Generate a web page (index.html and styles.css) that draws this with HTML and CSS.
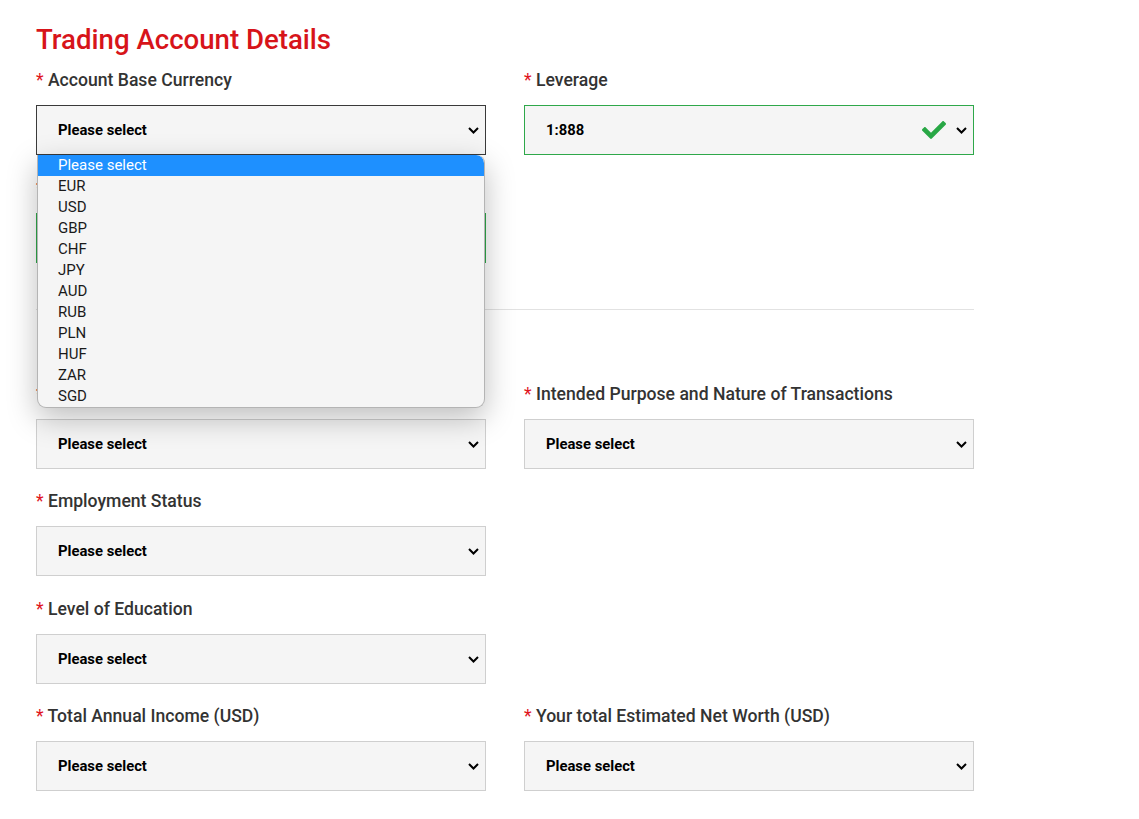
FILE: index.html
```html
<!DOCTYPE html>
<html lang="en">
<head>
<meta charset="utf-8">
<title>Trading Account Details</title>
<link rel="stylesheet" href="styles.css">
</head>
<body>
<main class="page">
  <h1 class="title">Trading Account Details</h1>

  <div class="grid">
    <div class="field">
      <label class="label"><span class="req">*</span> Account Base Currency</label>
      <div class="select focused">
        <span class="value">Please select</span>
        <svg class="chev" width="11" height="7" viewBox="0 0 11 7"><path d="M1 1 L5.5 5.5 L10 1" fill="none" stroke="#000" stroke-width="2"/></svg>
      </div>
      <ul class="options">
        <li class="opt active">Please select</li>
        <li class="opt">EUR</li>
        <li class="opt">USD</li>
        <li class="opt">GBP</li>
        <li class="opt">CHF</li>
        <li class="opt">JPY</li>
        <li class="opt">AUD</li>
        <li class="opt">RUB</li>
        <li class="opt">PLN</li>
        <li class="opt">HUF</li>
        <li class="opt">ZAR</li>
        <li class="opt">SGD</li>
      </ul>
    </div>
    <div class="field">
      <label class="label"><span class="req">*</span> Leverage</label>
      <div class="select valid">
        <span class="value">1:888</span>
        <svg class="check" width="24" height="24" viewBox="0 0 512 512"><path fill="#28a745" d="M173.898 439.404l-166.4-166.4c-9.997-9.997-9.997-26.206 0-36.204l36.203-36.204c9.997-9.998 26.207-9.998 36.204 0L192 312.69 432.095 72.596c9.997-9.997 26.207-9.997 36.204 0l36.203 36.204c9.997 9.997 9.997 26.206 0 36.204l-294.4 294.401c-9.998 9.997-26.207 9.997-36.204-.001z"/></svg>
        <svg class="chev" width="11" height="7" viewBox="0 0 11 7"><path d="M1 1 L5.5 5.5 L10 1" fill="none" stroke="#000" stroke-width="2"/></svg>
      </div>
    </div>
    <div class="field">
      <label class="label"><span class="req">*</span></label>
      <div class="select valid"></div>
    </div>
  </div>

  <hr class="divider">

  <div class="grid">
    <div class="field">
      <label class="label"><span class="req">*</span></label>
      <div class="select">
        <span class="value">Please select</span>
        <svg class="chev" width="11" height="7" viewBox="0 0 11 7"><path d="M1 1 L5.5 5.5 L10 1" fill="none" stroke="#000" stroke-width="2"/></svg>
      </div>
    </div>
    <div class="field">
      <label class="label"><span class="req">*</span> Intended Purpose and Nature of Transactions</label>
      <div class="select">
        <span class="value">Please select</span>
        <svg class="chev" width="11" height="7" viewBox="0 0 11 7"><path d="M1 1 L5.5 5.5 L10 1" fill="none" stroke="#000" stroke-width="2"/></svg>
      </div>
    </div>
    <div class="field">
      <label class="label"><span class="req">*</span> Employment Status</label>
      <div class="select">
        <span class="value">Please select</span>
        <svg class="chev" width="11" height="7" viewBox="0 0 11 7"><path d="M1 1 L5.5 5.5 L10 1" fill="none" stroke="#000" stroke-width="2"/></svg>
      </div>
    </div>
    <div class="field empty"></div>
    <div class="field">
      <label class="label"><span class="req">*</span> Level of Education</label>
      <div class="select">
        <span class="value">Please select</span>
        <svg class="chev" width="11" height="7" viewBox="0 0 11 7"><path d="M1 1 L5.5 5.5 L10 1" fill="none" stroke="#000" stroke-width="2"/></svg>
      </div>
    </div>
    <div class="field empty"></div>
    <div class="field">
      <label class="label"><span class="req">*</span> Total Annual Income (USD)</label>
      <div class="select">
        <span class="value">Please select</span>
        <svg class="chev" width="11" height="7" viewBox="0 0 11 7"><path d="M1 1 L5.5 5.5 L10 1" fill="none" stroke="#000" stroke-width="2"/></svg>
      </div>
    </div>
    <div class="field">
      <label class="label"><span class="req">*</span> Your total Estimated Net Worth (USD)</label>
      <div class="select">
        <span class="value">Please select</span>
        <svg class="chev" width="11" height="7" viewBox="0 0 11 7"><path d="M1 1 L5.5 5.5 L10 1" fill="none" stroke="#000" stroke-width="2"/></svg>
      </div>
    </div>
  </div>
</main>
</body>
</html>
```
FILE: styles.css
```css
* { box-sizing: border-box; }
html, body {
  margin: 0;
  padding: 0;
  background: #fff;
  font-family: Roboto, "Liberation Sans", Arial, sans-serif;
  color: #333;
}
.page {
  width: 1139px;
  padding: 22px 36px 20px 36px;
}
.title {
  margin: 0 0 10px 0;
  font-size: 27.6px;
  line-height: 36px;
  font-weight: 500;
  color: #d7141a;
}
.grid {
  display: grid;
  grid-template-columns: 450px 450px;
  column-gap: 38px;
  row-gap: 20.6px;
}
.field {
  position: relative;
}
.label {
  display: block;
  height: 24px;
  font-size: 17.6px;
  line-height: 24px;
  font-weight: 500;
  color: #333;
  margin-bottom: 13px;
}
.req {
  color: #e0141e;
  font-weight: 400;
}
.select {
  position: relative;
  height: 50px;
  border: 1px solid #cfcfcf;
  background: #f5f5f5;
  display: flex;
  align-items: center;
  padding-left: 21px;
}
.select.focused { border-color: #3a3a3a; }
.select.valid { border-color: #2ea84a; }
.value {
  font-size: 14.8px;
  font-weight: 700;
  color: #000;
}
.chev {
  position: absolute;
  right: 6px;
  top: 21px;
}
.check {
  position: absolute;
  right: 27px;
  top: 12px;
}
.options {
  position: absolute;
  z-index: 10;
  left: 1px;
  top: 87px;
  width: 448px;
  margin: 0;
  padding: 0;
  list-style: none;
  background: #f5f5f5;
  border: 1px solid #b4b4b4;
  border-top: none;
  border-radius: 0 8px 9px 9px;
  overflow: hidden;
  box-shadow: 0 10px 30px rgba(0, 0, 0, 0.26);
}
.opt {
  height: 21px;
  line-height: 21px;
  padding-left: 20px;
  font-size: 15px;
  color: #1a1a1a;
}
.opt.active {
  background: #1e90ff;
  color: #fff;
  border-radius: 0 8px 0 0;
}
.divider {
  margin: 46px 0 72px 0;
  width: 938px;
  border: none;
  border-top: 1px solid #e2e2e2;
}
```
